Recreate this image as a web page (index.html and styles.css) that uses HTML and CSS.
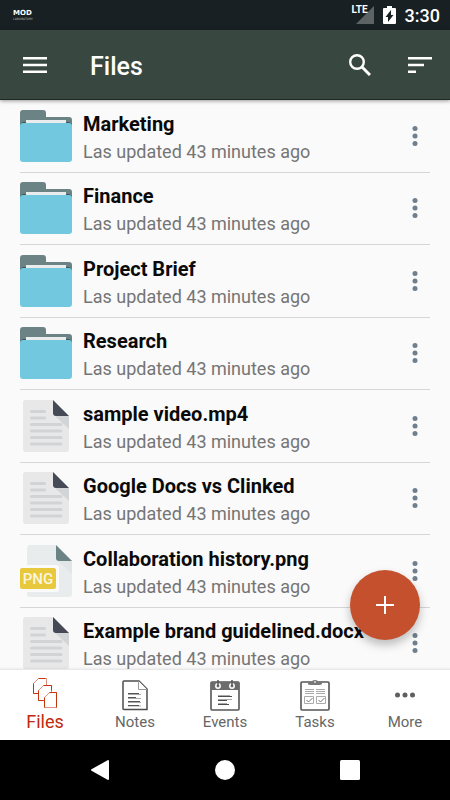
FILE: index.html
```html
<!DOCTYPE html>
<html lang="en">
<head>
<meta charset="utf-8">
<meta name="viewport" content="width=device-width, initial-scale=1">
<title>Files</title>
<link rel="stylesheet" href="styles.css">
</head>
<body>
<svg class="defs" aria-hidden="true">
  <symbol id="folder" viewBox="0 0 52 52">
    <path fill="#6c8385" d="M0 16V3q0-3 3-3h20q3 0 3 3v4h23q3 0 3 3v6z"/>
    <path fill="#3c5563" d="M0 16q0-3 3-4h46q3 1 3 4z"/>
    <path fill="#e9ebec" d="M6 10h40v5H6z"/>
    <rect y="13" width="52" height="39" rx="3" fill="#72c8df"/>
  </symbol>
  <symbol id="doc" viewBox="0 0 52 52">
    <path fill="#e8e8e8" d="M6 0h27l16 16v33q0 3-3 3H6q-3 0-3-3V3q0-3 3-3z"/>
    <path fill="#d3d4d6" d="M34 15l15 1v13z"/>
    <path fill="#464a57" d="M33 0l16 16H36q-3 0-3-3z"/>
    <path stroke="#d2d3d5" stroke-width="3" stroke-linecap="round" d="M11.500 11.500h13M11.500 18h13M11.500 24.500h29.500M11.500 31h29.500M11.500 37.500h29.500M11.500 44h29.500"/>
  </symbol>
  <symbol id="dots" viewBox="0 0 6 20">
    <g fill="#6f7f8d"><circle cx="3" cy="2.500" r="2.500"/><circle cx="3" cy="10" r="2.500"/><circle cx="3" cy="17.500" r="2.500"/></g>
  </symbol>
</svg>

<div class="status">
  <div class="brand"><span class="brand-name">MOD</span><span class="brand-sub">LABORATORY</span></div>
  <div class="status-right">
    <div class="signal">
      <svg width="18" height="18" viewBox="0 0 18 18"><path fill="#5d6265" d="M18 0v18H0z"/></svg>
      <span class="lte">LTE</span>
    </div>
    <svg width="13" height="18" viewBox="0 0 13 18"><path fill="#fff" d="M1 2h3V0h5v2h3q1 0 1 1v14q0 1-1 1H1q-1 0-1-1V3q0-1 1-1z"/><path fill="#182023" d="M8 4v5h2.500L5 16v-5H2.500z"/></svg>
    <span class="clock">3:30</span>
  </div>
</div>

<header class="appbar">
  <button class="icon-btn" aria-label="Menu"><svg width="24" height="16" viewBox="0 0 24 16"><path fill="#fff" d="M0 0h24v2.500H0zM0 6.700h24v2.500H0zM0 13.400h24v2.500H0z"/></svg></button>
  <h1>Files</h1>
  <button class="icon-btn" aria-label="Search"><svg width="22" height="22" viewBox="0 0 22 22" fill="none" stroke="#fff"><circle cx="8" cy="8" r="6.800" stroke-width="2.400"/><path d="M13 13l8 8" stroke-width="3"/></svg></button>
  <button class="icon-btn sort" aria-label="Sort"><svg width="24" height="16" viewBox="0 0 24 16"><path fill="#fff" d="M0 0h24v2.500H0zM0 6.700h16v2.500H0zM0 13.400h8v2.500H0z"/></svg></button>
</header>

<main>
  <ul class="files">
    <li><svg class="thumb"><use href="#folder"/></svg><div class="text"><h2>Marketing</h2><p>Las updated 43 minutes ago</p></div><button class="more" aria-label="Options"><svg width="6" height="20"><use href="#dots"/></svg></button></li>
    <li><svg class="thumb"><use href="#folder"/></svg><div class="text"><h2>Finance</h2><p>Las updated 43 minutes ago</p></div><button class="more" aria-label="Options"><svg width="6" height="20"><use href="#dots"/></svg></button></li>
    <li><svg class="thumb"><use href="#folder"/></svg><div class="text"><h2>Project Brief</h2><p>Las updated 43 minutes ago</p></div><button class="more" aria-label="Options"><svg width="6" height="20"><use href="#dots"/></svg></button></li>
    <li><svg class="thumb"><use href="#folder"/></svg><div class="text"><h2>Research</h2><p>Las updated 43 minutes ago</p></div><button class="more" aria-label="Options"><svg width="6" height="20"><use href="#dots"/></svg></button></li>
    <li><svg class="thumb"><use href="#doc"/></svg><div class="text"><h2>sample video.mp4</h2><p>Las updated 43 minutes ago</p></div><button class="more" aria-label="Options"><svg width="6" height="20"><use href="#dots"/></svg></button></li>
    <li><svg class="thumb"><use href="#doc"/></svg><div class="text"><h2>Google Docs vs Clinked</h2><p>Las updated 43 minutes ago</p></div><button class="more" aria-label="Options"><svg width="6" height="20"><use href="#dots"/></svg></button></li>
    <li>
      <svg class="thumb" viewBox="0 0 52 52">
        <path fill="#e9eced" d="M10 0h26l16 16v33q0 3-3 3H10q-3 0-3-3V3q0-3 3-3z"/>
        <path fill="#d7dfe0" d="M38 16h14v13z" opacity=".5"/>
        <path fill="#6c8385" d="M36 0l16 16H39q-3 0-3-3z"/>
        <path fill="#fafafa" d="M0 20h36q3 0 3 3v21q0 3-3 3H0z"/>
        <rect y="23" width="36" height="21" rx="2" fill="#e8c83c"/>
        <text class="png-text" x="18" y="39" text-anchor="middle">PNG</text>
      </svg>
      <div class="text"><h2>Collaboration history.png</h2><p>Las updated 43 minutes ago</p></div><button class="more" aria-label="Options"><svg width="6" height="20"><use href="#dots"/></svg></button></li>
    <li><svg class="thumb"><use href="#doc"/></svg><div class="text"><h2>Example brand guidelined.docx</h2><p>Las updated 43 minutes ago</p></div><button class="more" aria-label="Options"><svg width="6" height="20"><use href="#dots"/></svg></button></li>
  </ul>
  <button class="fab" aria-label="Add"><svg width="18" height="18" viewBox="0 0 18 18"><path fill="#fff" d="M8 0h2v8h8v2h-8v8H8v-8H0V8h8z"/></svg></button>
</main>

<nav class="tabs">
  <a href="#files" class="active">
    <svg width="26" height="32" viewBox="0 0 26 32" fill="#fff"><g stroke="#dd9180"><path d="M1.500 6.500l5-5h8v15h-13z"/><path d="M6.500 13.500l5-5h8v15h-13z"/><path d="M12.500 20.500l5-5h7v15h-12z"/></g><path fill="none" stroke="#c4350b" d="M6.500 16.500h-5v-10M6.500 1.500h7M11.500 23.500h-5v-10M11.500 8.500h8v5M12.500 30.500v-10M17.500 15.500h7v15"/></svg>
    <span>Files</span>
  </a>
  <a href="#notes">
    <svg width="26" height="32" viewBox="0 0 26 32"><path fill="#fff" stroke="#4d4d4d" stroke-width="1.500" d="M2 2h15l8 8v20.500H2q-1 0-1-1V3q0-1 1-1z"/><path fill="#fff" stroke="#999" d="M16.500 2v8.500H25"/><path stroke="#aaa" d="M6 15.500h13M6 19.500h13M6 23.500h13M6 27h13"/><path stroke="#555" d="M6 14.500h11M6 18.500h8M6 22.500h12M6 26.500h11"/></svg>
    <span>Notes</span>
  </a>
  <a href="#events">
    <svg width="30" height="32" viewBox="0 0 30 32"><rect x="1" y="3" width="28" height="28" rx="1" fill="#fff" stroke="#555" stroke-width="1.600"/><path fill="#6c6c6c" d="M1 3h28v8H1z"/><g fill="#6c6c6c" stroke="#fff" stroke-width="1.500"><circle cx="8" cy="7" r="2.200"/><circle cx="22" cy="7" r="2.200"/></g><path stroke="#555" stroke-width="1.500" d="M8 1v6M22 1v6"/><path stroke="#4d4d4d" d="M8 17.500h14M8 21.500h9M8 25.500h11"/><path stroke="#aaa" d="M8 16.500h12M8 20.500h14M8 24.500h9"/></svg>
    <span>Events</span>
  </a>
  <a href="#tasks">
    <svg width="30" height="32" viewBox="0 0 30 32"><rect x="1" y="3" width="28" height="28" rx="1" fill="#fff" stroke="#555" stroke-width="1.600"/><path fill="#777" d="M8 3h4q0-2 3-2t3 2h4v2q-1 1-3 1h-8q-3 0-3-1z"/><circle cx="15" cy="3" r="1" fill="#ddd"/><g fill="none" stroke="#aaa"><path d="M5 10.500h9M5 12.500h9M5 14.500h9M16 10.500h9M16 12.500h9M16 14.500h9M4.500 17.500h9v7h-9zM16.500 17.500h9v7h-9z"/><path stroke="#777" d="M6.500 21l2 2 4-4M18.500 21l2 2 4-4"/></g></svg>
    <span>Tasks</span>
  </a>
  <a href="#more">
    <svg width="20" height="32" viewBox="0 0 20 32" fill="#606060"><circle cx="2.500" cy="16" r="2.500"/><circle cx="10" cy="16" r="2.500"/><circle cx="17.500" cy="16" r="2.500"/></svg>
    <span>More</span>
  </a>
</nav>

<div class="sysbar">
  <button aria-label="Back"><svg width="20" height="20" viewBox="0 0 20 20"><path fill="#fff" d="M18 0q1 0 1 1v18q0 1-1 1L1.500 10.700q-1-.7 0-1.400z"/></svg></button>
  <button aria-label="Home"><svg width="20" height="20" viewBox="0 0 20 20"><circle cx="10" cy="10" r="10" fill="#fff"/></svg></button>
  <button aria-label="Recent apps"><svg width="20" height="20" viewBox="0 0 20 20"><rect width="20" height="20" rx="1.500" fill="#fff"/></svg></button>
</div>
</body>
</html>
```
FILE: styles.css
```css
* { box-sizing: border-box; }

body {
  margin: 0;
  height: 100vh;
  display: flex;
  flex-direction: column;
  overflow: hidden;
  background: #fafafa;
  font-family: Roboto, "Liberation Sans", sans-serif;
}

h1, h2, p, ul { margin: 0; padding: 0; }
ul { list-style: none; }
a { text-decoration: none; }
svg { display: block; flex: none; }
button {
  padding: 0;
  border: 0;
  background: none;
  display: flex;
  align-items: center;
  justify-content: center;
}

.defs { position: absolute; width: 0; height: 0; }

.status {
  flex: none;
  height: 30px;
  padding: 0 10px 0 13px;
  display: flex;
  align-items: center;
  justify-content: space-between;
  background: #182023;
  color: #fff;
}
.brand { display: flex; flex-direction: column; }
.brand-name { font: bold 7px/8px "DejaVu Sans", sans-serif; }
.brand-sub { font: 3px/4px "DejaVu Sans", sans-serif; color: #b5b8ba; }
.status-right { display: flex; align-items: center; gap: 9px; }
.signal { position: relative; width: 22px; display: flex; justify-content: flex-end; }
.lte { position: absolute; left: 0; top: -2px; font: bold 10px/12px "Liberation Sans Narrow", Roboto, sans-serif; }
.clock { font-size: 18px; font-weight: 500; }

.appbar {
  flex: none;
  height: 70px;
  padding: 0 10px;
  display: flex;
  align-items: center;
  background: #384841;
  border-bottom: 1px solid #1c2a22;
  box-shadow: 0 1px 4px rgba(0, 0, 0, .4);
  position: relative;
  z-index: 1;
}
.appbar h1 {
  flex: 1;
  padding-top: 3px;
  padding-left: 30px;
  color: #fff;
  font-size: 25px;
  font-weight: 500;
}
.icon-btn { width: 50px; height: 50px; }
.sort { margin-left: 10px; margin-right: -5px; }

main {
  flex: 1;
  min-height: 0;
  overflow: hidden;
  position: relative;
}
.files {
  min-height: 580px;
  padding: 0 20px;
  display: grid;
  grid-auto-rows: 1fr;
}
.files li {
  display: flex;
  align-items: center;
  gap: 11px;
  border-bottom: 1px solid #d6d6d6;
}
.thumb { width: 52px; height: 52px; }
.png-text { font: 500 15px Roboto, sans-serif; fill: #fbf6df; }
.text { flex: 1; min-width: 0; padding-top: 4px; white-space: nowrap; }
.text h2 { font-size: 20px; line-height: 27px; font-weight: 700; color: #0a0a0a; }
.text p { font-size: 18px; line-height: 27px; color: #757575; }
.more { width: 30px; height: 50px; }

.fab {
  position: absolute;
  right: 30px;
  bottom: 29px;
  width: 70px;
  height: 70px;
  border-radius: 50%;
  background: #c4502e;
  box-shadow: 0 5px 10px rgba(0, 0, 0, .25);
}

.tabs {
  flex: none;
  height: 71px;
  display: grid;
  grid-template-columns: repeat(5, 1fr);
  background: #fff;
  border-top: 1px solid #e8e8e8;
  box-shadow: 0 -1px 2px rgba(0, 0, 0, .06);
  position: relative;
}
.tabs a {
  padding-top: 9px;
  display: flex;
  flex-direction: column;
  align-items: center;
  gap: 1px;
  color: #666;
  font-size: 15px;
  line-height: 20px;
}
.tabs .active { padding-top: 7px; gap: 3px; color: #c2280c; font-size: 18px; }

.sysbar {
  flex: none;
  height: 60px;
  display: flex;
  align-items: center;
  justify-content: center;
  gap: 75px;
  background: #000;
}
.sysbar button { width: 50px; height: 50px; }
```
